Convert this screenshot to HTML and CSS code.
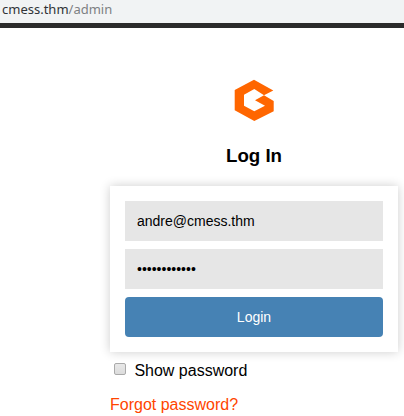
FILE: index.html
```html
<!DOCTYPE html>
<html lang="en">
<head>
<meta charset="utf-8">
<title>Log In</title>
<link rel="stylesheet" href="styles.css">
</head>
<body>
<header class="address">cmess.thm<span class="path">/admin</span></header>
<main class="login">
  <svg class="logo" viewBox="0 0 40 42" aria-hidden="true">
    <path fill="#ff6600" d="M20 .7 39.3 11.5 30 16.3 20.3 10 10 15.7V26.7L20.3 32.3 31 26.7 21 21.3 30 16.3 39.7 22V32.3L20.3 42 .7 31.3V11Z"/>
  </svg>
  <h1 class="title">Log In</h1>
  <form class="card">
    <input class="field" type="text" value="andre@cmess.thm">
    <input class="field" type="password" value="abcdefghijkl">
    <button class="submit" type="button">Login</button>
  </form>
  <label class="show"><span class="box"></span>Show password</label>
  <a class="forgot">Forgot password?</a>
</main>
</body>
</html>
```
FILE: styles.css
```css
* { box-sizing: border-box; }
body {
  margin: 0;
  height: 416px;
  overflow: hidden;
  background: #fff;
  color: #000;
  font: 16px/18px "Liberation Sans", Arial, sans-serif;
}
.address {
  height: 28px;
  padding-left: 2px;
  background: #f1f3f4;
  border-bottom: 5px solid #2b2b2b;
  color: #303437;
  font: 13px/19px "Noto Sans", sans-serif;
}
.path { color: #7d8083; }
.login {
  display: flex;
  flex-direction: column;
  width: 288px;
  margin-left: 110px;
}
.logo {
  align-self: center;
  width: 40px;
  height: 42px;
  margin-top: 51px;
}
.title {
  margin: 24px 0 0;
  font-size: 18.7px;
  line-height: 22px;
  text-align: center;
}
.card {
  display: flex;
  flex-direction: column;
  gap: 8px;
  height: 166px;
  margin-top: 19px;
  padding: 15.3px 15px 14.7px;
  background: #fff;
  box-shadow: 0 0 10px rgba(0, 0, 0, .2);
}
.field, .submit {
  width: 100%;
  height: 40px;
  border: 0;
  font: 14px "Liberation Sans", Arial, sans-serif;
}
.field {
  padding: 0 12px;
  background: #e6e6e6;
  color: #000;
}
.submit {
  border-radius: 4px;
  background: #4682b4;
  color: #fff;
}
.show {
  display: flex;
  align-items: center;
  margin-top: 10px;
}
.box {
  width: 12px;
  height: 12px;
  margin: 0 8.4px 4px 4px;
  border: 1px solid #aaa;
  border-radius: 2px;
  background: linear-gradient(#e8e8e8, #dcdcdc);
}
.forgot {
  margin-top: 16px;
  color: #ff4500;
}
```
